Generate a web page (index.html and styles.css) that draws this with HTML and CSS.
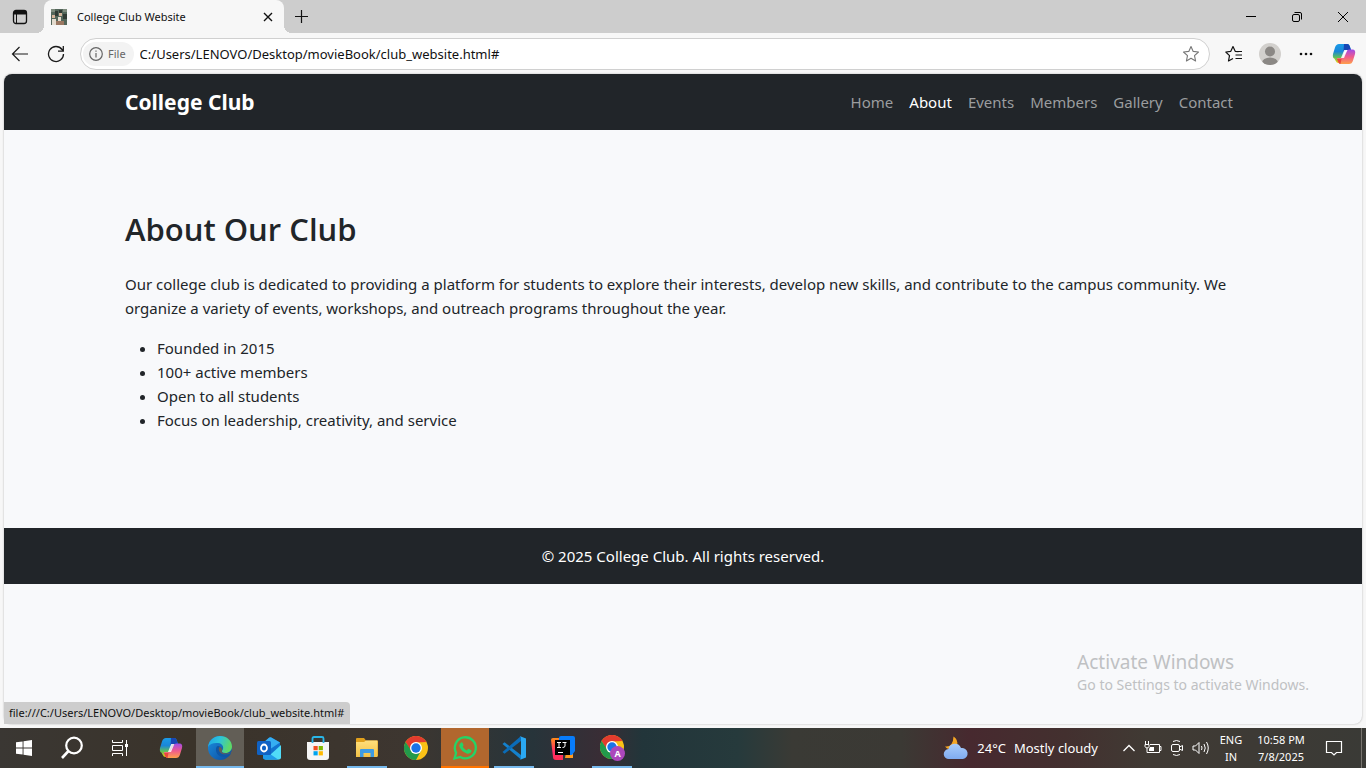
FILE: index.html
```html
<!DOCTYPE html>
<html lang="en">
<head>
<meta charset="utf-8">
<title>College Club Website</title>
<link rel="stylesheet" href="styles.css">
</head>
<body class="desktop">
<svg class="defs" aria-hidden="true">
  <defs>
    <linearGradient id="cpBlue" x1="0" y1="0" x2="0" y2="1"><stop offset="0" stop-color="#1a9be8"/><stop offset=".4" stop-color="#1a86d8"/><stop offset=".7" stop-color="#5fbf5a"/><stop offset="1" stop-color="#f5c60c"/></linearGradient>
    <linearGradient id="cpPink" x1="0" y1="0" x2="0" y2="1"><stop offset="0" stop-color="#a04be8"/><stop offset=".5" stop-color="#ee5a8e"/><stop offset="1" stop-color="#ffa04a"/></linearGradient>
    <linearGradient id="edgeTop" x1="0" y1="0" x2="1" y2=".3"><stop offset="0" stop-color="#1fa2e6"/><stop offset=".5" stop-color="#2cc4dc"/><stop offset="1" stop-color="#5fd867"/></linearGradient>
    <linearGradient id="edgeLow" x1="0" y1="0" x2="1" y2="1"><stop offset="0" stop-color="#1b8fe0"/><stop offset="1" stop-color="#0c4a9c"/></linearGradient>
    <linearGradient id="cloud" x1="0" y1="0" x2="0" y2="1"><stop offset="0" stop-color="#a9ccfa"/><stop offset="1" stop-color="#7fabf0"/></linearGradient>
    <linearGradient id="folder" x1="0" y1="0" x2="0" y2="1"><stop offset="0" stop-color="#ffdf7c"/><stop offset="1" stop-color="#f3c247"/></linearGradient>
    <linearGradient id="ijWarm" x1="0" y1="0" x2="0" y2="1"><stop offset="0" stop-color="#ff8c1a"/><stop offset=".6" stop-color="#ff2d6a"/><stop offset="1" stop-color="#ff2d55"/></linearGradient>
    <symbol id="copilot" viewBox="0 0 24 22">
      <path d="M7 1h8q2 0 2.700 2l1.300 4h-4q-2 0-2.700 2L9.500 17q-.8 3-3 3-2 0-2.700-2L2.600 16H4Q0 16 1 11L3 4.500Q4 1 7 1z" fill="url(#cpBlue)"/>
      <path d="M12 1h3.500q1.600 0 2.200 2L19 7h-5q-2 0-2.500 2z" fill="#1747b5"/>
      <path d="M17 21H9q-2 0-2.700-2L5 15h4q2 0 2.700-2L14 9q.8-2.500 3-2.500h3.500q3.500 0 2.500 4.500l-2 6.500Q20 21 17 21z" fill="url(#cpPink)"/>
      <path d="M12.200 7h3.200L12 15H9z" fill="#fff" opacity=".85"/>
      <path d="M5 16h4.500l-1 5Q6.800 21 6.200 19z" fill="#e8473c"/>
    </symbol>
    <symbol id="chrome" viewBox="0 0 24 24">
      <circle cx="12" cy="12" r="12" fill="#fbc116"/>
      <path d="M1.600 6A12 12 0 0 1 22.400 6L12 6.600A5.400 5.400 0 0 0 7 9.700L6.800 15z" fill="#e33b2e"/>
      <path d="M1.600 6A12 12 0 0 0 12 24l5-9.200L12 17.400a5.400 5.400 0 0 1-5-3.200z" fill="#229a4b"/>
      <circle cx="12" cy="12" r="6" fill="#fff"/><circle cx="12" cy="12" r="4.700" fill="#1a73e8"/>
    </symbol>
  </defs>
</svg>

<header class="chrome">
  <div class="tabstrip">
    <button class="tab-actions" aria-label="Tab actions"><svg width="16" height="16" viewBox="0 0 16 16"><rect x="1.500" y="1.500" width="13" height="13" rx="2.500" fill="none" stroke="#111" stroke-width="1.300"/><path d="M2 2h12v3.500H2z" fill="#111"/><path d="M4.500 5v9" stroke="#111"/></svg></button>
    <div class="tab">
      <svg width="16" height="16" viewBox="0 0 16 16" aria-hidden="true"><path fill="#53665a" d="M0 0h16v16H0z"/><path fill="#7d8a7c" d="M0 0h4v3H0zM12 0h4v3h-4z"/><path fill="#303a34" d="M4 2h3v5H4zM8 1h3v3H8zM12 5h4v5h-4z"/><path fill="#d6b49b" d="M1 6h3v3H1zM8 4h3v3H8z"/><path fill="#e3dbce" d="M1 10h4v6H1zM7 8h3v5H7z"/><path fill="#9b7862" d="M5 12h8v4H5z"/></svg>
      <span class="tab-title">College Club Website</span>
      <button class="tab-close" aria-label="Close tab"><svg width="10" height="10" viewBox="0 0 10 10"><path d="M1 1l8 8M9 1L1 9" stroke="#111" stroke-width="1.400"/></svg></button>
    </div>
    <button class="new-tab" aria-label="New tab"><svg width="15" height="15" viewBox="0 0 15 15"><path d="M7.500 1v13M1 7.500h13" stroke="#111" stroke-width="1.200"/></svg></button>
    <div class="window-buttons">
      <button aria-label="Minimize"><svg width="12" height="12" viewBox="0 0 12 12"><path d="M1 5.500h10" stroke="#000"/></svg></button>
      <button aria-label="Restore"><svg width="12" height="12" viewBox="0 0 12 12"><g fill="none" stroke="#000"><rect x="1.500" y="3.500" width="7" height="7" rx="1.500"/><path d="M3.500 1.500H9q1.500 0 1.500 1.500v5.500"/></g></svg></button>
      <button aria-label="Close"><svg width="12" height="12" viewBox="0 0 12 12"><path d="M1 1l10 10M11 1L1 11" stroke="#000"/></svg></button>
    </div>
  </div>
  <div class="toolbar">
    <button class="tool" aria-label="Back"><svg width="18" height="18" viewBox="0 0 18 18"><path d="M17 9H1.500M8.500 2l-7 7 7 7" fill="none" stroke="#1b1b1b" stroke-width="1.200"/></svg></button>
    <button class="tool" aria-label="Refresh"><svg width="18" height="18" viewBox="0 0 18 18"><path d="M16.500 9A7.500 7.500 0 1 1 15 4.500L16 6M16.300 1v5.200H11" fill="none" stroke="#1b1b1b" stroke-width="1.300"/></svg></button>
    <div class="address">
      <span class="scheme"><svg width="14" height="14" viewBox="0 0 14 14" aria-hidden="true"><circle cx="7" cy="7" r="6.300" fill="none" stroke="#666" stroke-width="1.200"/><path d="M7 6v4.500M7 3.500v1.300" stroke="#666" stroke-width="1.200"/></svg>File</span>
      <input class="url" aria-label="Address" value="C:/Users/LENOVO/Desktop/movieBook/club_website.html#">
      <button class="star" aria-label="Add to favorites"><svg width="18" height="18" viewBox="0 0 18 18"><path d="M9 1.500l2.200 4.900 5.300.6-4 3.600 1.100 5.400L9 13.300 4.400 16l1.100-5.400-4-3.600 5.300-.6z" fill="none" stroke="#777" stroke-width="1.100" stroke-linejoin="round"/></svg></button>
    </div>
    <button class="tool" aria-label="Favorites"><svg width="18" height="18" viewBox="0 0 18 18"><path d="M13.500 6.700l-3.300-.4L8 1.500 5.800 6.300l-5 .7 3.700 3.600-1 5.400L8 13.500M11.500 6.500H17M10.500 10H17M10.500 13.500H17" fill="none" stroke="#111" stroke-width="1.200" stroke-linejoin="round"/></svg></button>
    <button class="tool" aria-label="Profile"><svg width="22" height="22" viewBox="0 0 22 22"><clipPath id="av"><circle cx="11" cy="11" r="11"/></clipPath><g clip-path="url(#av)"><path fill="#d2d0cd" d="M0 0h22v22H0z"/><circle cx="11" cy="8.500" r="5" fill="#8b8885"/><ellipse cx="11" cy="20" rx="8" ry="5.500" fill="#8b8885"/></g></svg></button>
    <button class="tool" aria-label="Settings and more"><svg width="14" height="4" viewBox="0 0 14 4" fill="#111"><circle cx="2" cy="2" r="1.300"/><circle cx="7" cy="2" r="1.300"/><circle cx="12" cy="2" r="1.300"/></svg></button>
    <button class="tool" aria-label="Copilot"><svg width="24" height="22"><use href="#copilot"/></svg></button>
  </div>
</header>

<div class="window-body">
  <div class="page">
    <nav class="navbar">
      <div class="container nav-row">
        <a class="brand" href="#">College Club</a>
        <ul class="nav-links">
          <li><a href="#">Home</a></li>
          <li><a class="current" href="#">About</a></li>
          <li><a href="#">Events</a></li>
          <li><a href="#">Members</a></li>
          <li><a href="#">Gallery</a></li>
          <li><a href="#">Contact</a></li>
        </ul>
      </div>
    </nav>
    <main class="container about">
      <h2>About Our Club</h2>
      <p>Our college club is dedicated to providing a platform for students to explore their interests, develop new skills, and contribute to the campus community. We organize a variety of events, workshops, and outreach programs throughout the year.</p>
      <ul class="facts">
        <li>Founded in 2015</li>
        <li>100+ active members</li>
        <li>Open to all students</li>
        <li>Focus on leadership, creativity, and service</li>
      </ul>
    </main>
    <footer class="footer">© 2025 College Club. All rights reserved.</footer>
  </div>
  <div class="status">file:///C:/Users/LENOVO/Desktop/movieBook/club_website.html#</div>
  <div class="watermark"><div class="wm-title">Activate Windows</div><div>Go to Settings to activate Windows.</div></div>
</div>

<div class="taskbar">
  <button class="task start" aria-label="Start"><svg width="16" height="16" viewBox="0 0 16 16" fill="#fff"><path d="M0 2.300L6.600 1.400V7.500H0zM7.500 1.300L16 0v7.500H7.500zM0 8.500h6.600v6.100L0 13.700zM7.500 8.500H16V16l-8.500-1.200z"/></svg></button>
  <button class="task plain" aria-label="Search"><svg width="24" height="24" viewBox="0 0 24 24"><circle cx="14" cy="9.500" r="7.800" fill="none" stroke="#fff" stroke-width="2.200"/><path d="M8.500 15L2 22" stroke="#fff" stroke-width="2.600"/></svg></button>
  <button class="task plain" aria-label="Task view"><svg width="18" height="18" viewBox="0 0 18 18"><path d="M1.500 1v2.500h10V1M1.500 17v-2.500h10V17M1.500 6.500h10v5h-10zM15.500 1v16" fill="none" stroke="#fff"/><path d="M14 5h3v3h-3z" fill="#fff"/></svg></button>
  <button class="task copilot" aria-label="Copilot"><svg width="24" height="22"><use href="#copilot"/></svg></button>
  <button class="task open active" aria-label="Edge"><svg width="26" height="26" viewBox="0 0 26 26"><circle cx="13" cy="13" r="12" fill="url(#edgeLow)"/><path d="M1 12C2 5 7 1 13 1c7 0 12 5 12 10.500 0 4-3 6.500-6.500 6.500-3 0-4-1.300-3.500-2.300 2.500-2.500 1-7.200-4-7.700C6.500 7.500 2.500 9 1 12z" fill="url(#edgeTop)"/><path d="M9.500 12c-2 5 1.500 10 8 10 3 0 5-1 6.300-3.300-2.800 1.500-6.500 1.500-8.800-.2-1.300-1-.7-2 0-3 .5-3-4-6-5.500-3.500z" fill="#0e56a6"/><path d="M12 12.500c-1.200 3.300 1.500 7 6.500 6.800 2.700 0 4.300-.5 5.500-2-1.300.8-3 1.200-5 1.100-3.500 0-5-1.400-4-2.900.8-1.500-1.500-4.500-3-3z" fill="#625e56"/></svg></button>
  <button class="task" aria-label="Outlook"><svg width="26" height="26" viewBox="0 0 26 26"><path d="M7 8l6-5.300q1-.9 2.300-.2L24 7.500v15q0 2-2 2H10q-3 0-3-2z" fill="#1173cf"/><path d="M7 8l6-5.300q1-.9 2.300-.2L24 7.500l-9 6z" fill="#35aef2"/><path d="M25 10v12.500q0 2-2 2H9z" fill="#50dcf8"/><path d="M7 14l15 10.500H9q-2 0-2-2z" fill="#1f9bea"/><rect x="1" y="6" width="14" height="14" rx="1.500" fill="#1062c4"/><ellipse cx="8" cy="13" rx="3" ry="3.500" fill="none" stroke="#fff" stroke-width="1.800"/></svg></button>
  <button class="task" aria-label="Store"><svg width="26" height="26" viewBox="0 0 26 26"><path d="M2 7h22v15q0 3-3 3H5q-3 0-3-3z" fill="#f5f5f5"/><path d="M7.500 8V3.500Q7.500 2 9 2h8q1.500 0 1.500 1.500V8" fill="none" stroke="#29b6e8" stroke-width="1.800"/><path d="M8.500 11h4.200v4.200H8.500z" fill="#f25022"/><path d="M13.700 11h4.200v4.200h-4.200z" fill="#7fba00"/><path d="M8.500 16.200h4.200v4.200H8.500z" fill="#00a4ef"/><path d="M13.700 16.200h4.200v4.200h-4.200z" fill="#ffb900"/></svg></button>
  <button class="task open" aria-label="File Explorer"><svg width="24" height="22" viewBox="0 0 24 22"><path d="M1 2q0-1 1-1h7l2 2.500h11q1 0 1 1V19H1z" fill="#e0a01c"/><path d="M1 5h8l2-1.500h11.500V20H1z" fill="url(#folder)"/><path d="M5 20v-7q0-1 1-1h12q1 0 1 1v7h-3.500v-4h-7v4z" fill="#3d9be3"/></svg></button>
  <button class="task" aria-label="Chrome"><svg width="24" height="24"><use href="#chrome"/></svg></button>
  <button class="task alert" aria-label="WhatsApp"><svg width="26" height="26" viewBox="0 0 26 26"><path d="M2.500 23.500l1.600-5.700A10.500 10.500 0 1 1 8.300 22z" fill="none" stroke="#25d366" stroke-width="2.300"/><path d="M9 7.500q.8-.8 1.500.2l1 2.300q.2.600-.8 1.800 1.600 2.700 4 3.700l1.300-1.500q.4-.5 1 0l2.300 1.200q.7.500-.2 2-1.800 2-4.500 1.200-5-1.800-7-6.400-.8-2.700 1.400-4.500z" fill="#25d366"/></svg></button>
  <button class="task open" aria-label="Visual Studio Code"><svg width="26" height="26" viewBox="0 0 26 26"><path d="M1.500 9l2-1.700L20 20v4.500z" fill="#1481cd"/><path d="M1.500 17l2 1.800L20 6V1z" fill="#0a6cb8"/><path d="M18.500 1L25 3.500v19L18.500 25q1.500-.7 1.500-2V3q0-1.300-1.500-2z" fill="#2aa8f2"/></svg></button>
  <button class="task" aria-label="IntelliJ IDEA"><svg width="26" height="26" viewBox="0 0 26 26"><path d="M1 5q0-2 2-2h10v22H6q-3 0-3-3z" fill="url(#ijWarm)"/><path d="M17 12h6v11h-8z" fill="#ff9a20"/><path d="M9 3q0-2 2-2h12q2 0 2 2v13l-3 4H9z" fill="#087cfa"/><path d="M5 5h15v15H5z"/><path d="M7 7.500h4M9 7.500v5M7 12.500h4M12.500 7.500h4M15 7.500V11q0 1.500-2.500 1.500M8 17.500h5" stroke="#fff" fill="none"/></svg></button>
  <button class="task open" aria-label="Chrome, profile A"><svg width="26" height="26" viewBox="0 0 26 26"><svg x="1" y="0" width="24" height="24"><use href="#chrome"/></svg><circle cx="18.500" cy="18.500" r="7.500" fill="#ab47bc"/><text class="profile-letter" x="18.500" y="22" text-anchor="middle">A</text></svg></button>
  <div class="tray">
    <button class="weather"><svg width="26" height="26" viewBox="0 0 26 26" aria-hidden="true"><path d="M10.500 1.500Q15.500 5 14 10l-6 4q-4 .5-6-2.500 8 1 8.500-10z" fill="#f5a623"/><path d="M6 24a5 5 0 0 1-.5-10A6.500 6.500 0 0 1 18 13a5.500 5.500 0 0 1 2 11z" fill="url(#cloud)"/></svg><span>24°C</span><span>Mostly cloudy</span></button>
    <button class="tray-icon" aria-label="Hidden icons"><svg width="14" height="16" viewBox="0 0 14 16"><path d="M1.500 11L7 5.500l5.500 5.500" fill="none" stroke="#fff" stroke-width="1.300"/></svg></button>
    <button class="tray-icon" aria-label="Battery"><svg width="18" height="16" viewBox="0 0 18 16"><path d="M6 4.500h9.500v8h-10M16 6.500h1v4h-1M1.500 1v3M4.500 1v3M1 4.500h4v2q0 1-2 1.500-2-.5-2-1.500zM3 8v4.500h3" fill="none" stroke="#fff"/><path d="M6 7h4v4H5V9z" fill="#fff"/></svg></button>
    <button class="tray-icon" aria-label="Meet now"><svg width="14" height="18" viewBox="0 0 14 18"><g fill="none" stroke="#fff"><rect x="1.500" y="5.500" width="8" height="7" rx="1.500"/><path d="M9.500 8l3-1.500v5L9.500 10M3 2.500q3.500-2 7 0M3 15.500q3.500 2 7 0"/></g></svg></button>
    <button class="tray-icon" aria-label="Volume"><svg width="18" height="16" viewBox="0 0 18 16"><path d="M1 6h2.500L7 2.500v11L3.500 10H1zM9.500 6q1 2 0 4M12 4q2.500 4 0 8M14.500 2q3.500 6 0 12" fill="none" stroke="#fff"/></svg></button>
    <button class="stack lang"><span>ENG</span><span>IN</span></button>
    <button class="stack clock"><span>10:58 PM</span><span>7/8/2025</span></button>
    <button class="notify" aria-label="Notifications"><svg width="18" height="18" viewBox="0 0 18 18"><path d="M1.500 2.500h15v11h-5L9 16l-2.500-2.500h-5z" fill="none" stroke="#fff" stroke-width="1.200"/></svg></button>
    <button class="show-desktop" aria-label="Show desktop"></button>
  </div>
</div>
</body>
</html>
```
FILE: styles.css
```css
*, *::before, *::after { box-sizing: border-box; }
.desktop { margin: 0; height: 100vh; display: flex; flex-direction: column; overflow: hidden; background: #f7f7f7; font: 15px/24px "Noto Sans", "Open Sans", sans-serif; color: #212529; }
.defs { position: absolute; width: 0; height: 0; }
button { border: 0; padding: 0; margin: 0; background: none; font: inherit; color: inherit; display: flex; align-items: center; justify-content: center; flex: none; }
svg { display: block; flex: none; }
a { text-decoration: none; color: inherit; }

.tabstrip { display: flex; height: 34px; padding-bottom: 1px; background: linear-gradient(#cdcdcd 33px, #f7f7f7 33px); }
.tab-actions { width: 44px; padding-right: 4px; }
.tab { position: relative; display: flex; align-items: center; width: 240px; padding: 0 8px 0 7px; background: #f7f7f7; border-radius: 8px 8px 0 0; font-size: 11px; color: #111; }
.tab::before, .tab::after { content: ""; position: absolute; bottom: 0; width: 8px; height: 8px; }
.tab::before { right: 100%; background: radial-gradient(circle at 0 0, #cdcdcd 8px, #f7f7f7 8px); }
.tab::after { left: 100%; background: radial-gradient(circle at 100% 0, #cdcdcd 8px, #f7f7f7 8px); }
.tab-title { flex: 1; padding-left: 10px; }
.tab-close { width: 16px; height: 16px; }
.new-tab { width: 34px; }
.window-buttons { margin-left: auto; display: flex; }
.window-buttons button { width: 46px; }

.toolbar { display: flex; align-items: center; height: 40px; padding: 0 2px; }
.tool { width: 36px; height: 32px; }
.toolbar .tool:last-child { width: 40px; }
.address { flex: 1; display: flex; align-items: center; height: 32px; margin: 0 6px; padding: 0 9px 0 2px; background: #fff; border: 1px solid #d0d0d0; border-radius: 16px; }
.scheme { display: flex; align-items: center; gap: 5px; height: 24px; padding: 0 8px 0 6px; border-radius: 12px; background: #f3f3f3; color: #666; font-size: 11px; }
.url { flex: 1; min-width: 0; border: 0; outline: 0; padding: 0 6px; background: none; font: 13px/20px "Noto Sans", sans-serif; color: #111; }

.window-body { position: relative; flex: 1; display: flex; min-height: 0; padding: 0 4px 4px; }
.page { flex: 1; background: #f8f9fb; border-radius: 8px; overflow: hidden; box-shadow: 0 0 2px #aaa; }
.container { max-width: 1140px; margin: 0 auto; padding: 0 12px; }
.navbar { background: #212529; color: #fff; }
.nav-row { display: flex; align-items: center; justify-content: space-between; min-height: 56px; }
.brand { font: bold 21px/30px "Noto Sans", sans-serif; }
.nav-links { display: flex; list-style: none; margin: 0; padding: 0; }
.nav-links a { display: block; padding: 8px; color: #9b9d9f; }
.nav-links .current { color: #fff; }
.about { padding-top: 80px; padding-bottom: 80px; }
.about h2 { margin: 0 0 24px; font: 600 31px/38px "Open Sans", sans-serif; }
.about p { margin: 0 0 16px; }
.facts { margin: 0 0 16px; padding-left: 32px; }
.footer { padding: 16px; background: #212529; color: #fff; text-align: center; }
.status { position: absolute; left: 4px; bottom: 4px; height: 22px; padding: 0 6px 0 5px; background: #cdcdcd; border-radius: 0 4px 0 0; color: #111; font-size: 11px; line-height: 22px; }
.watermark { position: absolute; right: 57px; bottom: 32px; color: #bfc1c3; font-size: 14px; line-height: 22px; }
.wm-title { font-size: 19px; line-height: 24px; }

.taskbar { display: flex; height: 40px; color: #fff; background: linear-gradient(90deg, #3a3733 0, #3a332a 14%, #3d3630 30%, #27343a 39%, #392d35 44%, #22353a 47%, #263a3c 54%, #3a3a35 58%, #3b3934 66%, #47292f 71%, #43302f 78%, #403a34 84%, #3a3a36 100%); }
.task { width: 48px; height: 40px; padding: 0 4px; margin-right: 1px; }
.task.start, .task.plain { padding: 0; margin: 0; }
.task.copilot { margin-left: 3px; }
.task.open { border-bottom: 2px solid #76b9ed; width: 40px; margin: 0 5px 0 4px; padding-top: 2px; }
.task.active { width: 48px; margin: 0 1px 0 0; background: #625e56; }
.task.alert { background: #b1672e; border-bottom: 2px solid #ff7300; padding-top: 2px; }
.profile-letter { font: bold 9px "Open Sans", sans-serif; fill: #fff; }
.tray { margin-left: auto; display: flex; align-items: center; font-size: 13px; }
.weather { gap: 8px; margin-right: 19px; }
.tray-icon { width: 24px; height: 40px; }
.stack { flex-direction: column; font-size: 11px; line-height: 17px; }
.lang { width: 36px; }
.clock { width: 64px; }
.notify { width: 42px; height: 40px; margin-right: 6px; }
.show-desktop { width: 5px; height: 40px; border-left: 1px solid #77746f; }
```
